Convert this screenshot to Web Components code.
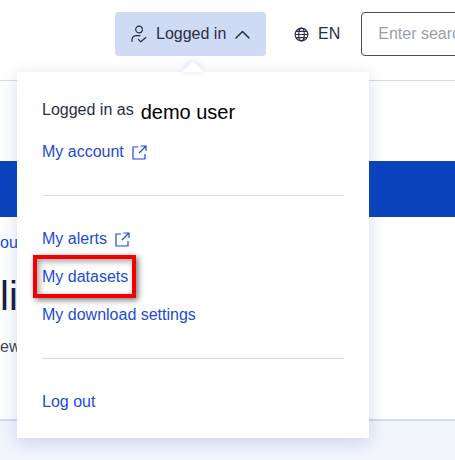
<!DOCTYPE html>
<html lang="en">
<head>
<meta charset="utf-8">
<title>Logged in menu</title>
<style>
  html, body { margin: 0; padding: 0; height: 100%; overflow: hidden; background: #fff; }
  body { font-family: "Liberation Sans", Arial, sans-serif; color: #1c1c3c; }
</style>
</head>
<body>
<site-page></site-page>

<script>
const ICONS = {
  user: `<svg width="16" height="18" viewBox="0 0 16 18" fill="none" stroke="currentColor" stroke-width="1.2" stroke-linecap="round" stroke-linejoin="round"><circle cx="8" cy="4.500" r="3.300"/><path d="M1 16.500v-2a4.500 4.500 0 0 1 4.500-3.800h3.500"/><path d="M7.500 14.500l2.300 2.300 5-4.300"/></svg>`,
  chevron: `<svg width="15" height="9" viewBox="0 0 15 9" fill="none" stroke="currentColor" stroke-width="1.500" stroke-linecap="round" stroke-linejoin="round"><path d="M1 8l6.500-6.500L14 8"/></svg>`,
  globe: `<svg width="15" height="15" viewBox="0 0 16 16" fill="none" stroke="currentColor" stroke-width="1.200"><circle cx="8" cy="8" r="6.800"/><ellipse cx="8" cy="8" rx="3" ry="6.800"/><path d="M1.200 8h13.600M2.200 4.700h11.600M2.200 11.300h11.600"/></svg>`,
  external: `<svg width="15" height="15" viewBox="0 0 15 15" fill="none" stroke="#1c4bd6" stroke-width="1.200"><path d="M6 2H1v12h12v-5"/><path d="M7 8l6.500-6.500M8.500 1h5.500v5"/></svg>`,
};

class HeaderBar extends HTMLElement {
  constructor() {
    super();
    this.attachShadow({ mode: 'open' });
    this.shadowRoot.innerHTML = `
      <style>
        :host {
          display: flex;
          align-items: flex-start;
          box-sizing: border-box;
          height: 81px;
          padding: 12px 0 0 115px;
          border-bottom: 1px solid #cfdaf5;
          white-space: nowrap;
          font-size: 16px;
          color: #2a2d45;
        }
        .account {
          flex: none;
          display: flex;
          align-items: center;
          width: 151px;
          height: 44px;
          box-sizing: border-box;
          padding-left: 16px;
          background: #cfdaf5;
          border-radius: 4px;
          gap: 9px;
        }
        .lang {
          flex: none;
          display: flex;
          align-items: center;
          height: 44px;
          margin-left: 28px;
          gap: 9px;
        }
        .search {
          flex: none;
          width: 200px;
          height: 44px;
          box-sizing: border-box;
          margin-left: 21px;
          padding-left: 16px;
          display: flex;
          align-items: center;
          border: 1px solid #4a4f63;
          border-radius: 4px;
          color: #9a9ea8;
        }
      </style>
      <div class="account">${ICONS.user}<span>Logged in</span>${ICONS.chevron}</div>
      <div class="lang">${ICONS.globe}<span>EN</span></div>
      <div class="search">Enter search</div>
    `;
  }
}

class PageContent extends HTMLElement {
  constructor() {
    super();
    this.attachShadow({ mode: 'open' });
    this.shadowRoot.innerHTML = `
      <style>
        :host {
          display: flex;
          flex-direction: column;
          height: 340px;
          box-sizing: border-box;
          padding-top: 80px;
          border-bottom: 2px solid #cfdaf5;
          font-size: 16px;
        }
        .band { height: 56px; background: #0b43bd; }
        .crumb { margin-top: 16px; height: 20px; line-height: 20px; color: #1c4bd6; }
        h1 {
          margin: 21px 0 0;
          font-size: 40px;
          line-height: 44px;
          font-weight: 400;
          color: #1c1c3c;
        }
        p { margin: 19px 0 0; line-height: 20px; color: #44485a; }
      </style>
      <div class="band"></div>
      <div class="crumb">ou</div>
      <h1>li</h1>
      <p>ew</p>
    `;
  }
}

class MenuLink extends HTMLElement {
  constructor() {
    super();
    this.attachShadow({ mode: 'open' });
    const ext = this.hasAttribute('external') ? ICONS.external : '';
    this.shadowRoot.innerHTML = `
      <style>
        :host {
          display: flex;
          align-items: center;
          gap: 8px;
          height: 24px;
          color: #1c4bd6;
          font-size: 16px;
        }
        svg { display: block; }
      </style>
      <slot></slot>${ext}
    `;
  }
}

class AccountMenu extends HTMLElement {
  constructor() {
    super();
    this.attachShadow({ mode: 'open' });
    this.shadowRoot.innerHTML = `
      <style>
        :host {
          position: absolute;
          left: 17px;
          top: 72px;
          width: 352px;
          height: 366px;
          box-sizing: border-box;
          padding: 26px 25px 0;
          background: #fff;
          box-shadow: 0 4px 16px rgba(40, 70, 160, .2);
          display: flex;
          flex-direction: column;
          font-size: 16px;
          color: #2a2d45;
        }
        .arrow-shadow {
          position: absolute;
          left: 165px;
          top: -11px;
          filter: drop-shadow(0 -1px 3px rgba(40, 70, 160, .18));
        }
        .arrow {
          width: 22px;
          height: 11px;
          background: #fff;
          clip-path: polygon(50% 0, 100% 100%, 0 100%);
        }
        .who { display: flex; align-items: center; height: 24px; gap: 7px; }
        .who b { font: 400 20px "Liberation Sans", Arial, sans-serif; color: #000; position: relative; top: 2px; }
        hr { border: 0; border-top: 1px solid #cfdaf5; margin: 0; }
        .first { margin-top: 18px; }
        .sep1 { margin-top: 31px; }
        .group { margin-top: 31px; display: flex; flex-direction: column; gap: 14px; }
        .sep2 { margin-top: 31px; }
        .last { margin-top: 31px; }
      </style>
      <div class="arrow-shadow"><div class="arrow"></div></div>
      <div class="who"><span>Logged in as</span><b>demo user</b></div>
      <menu-link class="first" external>My account</menu-link>
      <hr class="sep1">
      <div class="group">
        <menu-link external>My alerts</menu-link>
        <menu-link>My datasets</menu-link>
        <menu-link>My download settings</menu-link>
      </div>
      <hr class="sep2">
      <menu-link class="last">Log out</menu-link>
    `;
  }
}

class CalloutBox extends HTMLElement {
  constructor() {
    super();
    this.attachShadow({ mode: 'open' });
    this.shadowRoot.innerHTML = `
      <style>
        :host {
          position: absolute;
          left: 33px;
          top: 255px;
          width: 103px;
          height: 43px;
          box-sizing: border-box;
          border: 4px solid #f40000;
          box-shadow: 2px 2px 6px rgba(0, 0, 0, .55), inset 2px 2px 6px rgba(0, 0, 0, .4);
        }
      </style>
    `;
  }
}

class SitePage extends HTMLElement {
  constructor() {
    super();
    this.attachShadow({ mode: 'open' });
    this.shadowRoot.innerHTML = `
      <style>
        :host {
          display: block;
          position: relative;
          width: 455px;
          height: 460px;
          overflow: hidden;
          background: #f3f5fd;
        }
        .top { background: #fff; }
      </style>
      <div class="top">
        <header-bar></header-bar>
        <page-content></page-content>
      </div>
      <account-menu></account-menu>
      <callout-box></callout-box>
    `;
  }
}

customElements.define('header-bar', HeaderBar);
customElements.define('page-content', PageContent);
customElements.define('menu-link', MenuLink);
customElements.define('account-menu', AccountMenu);
customElements.define('callout-box', CalloutBox);
customElements.define('site-page', SitePage);
</script>
</body>
</html>
